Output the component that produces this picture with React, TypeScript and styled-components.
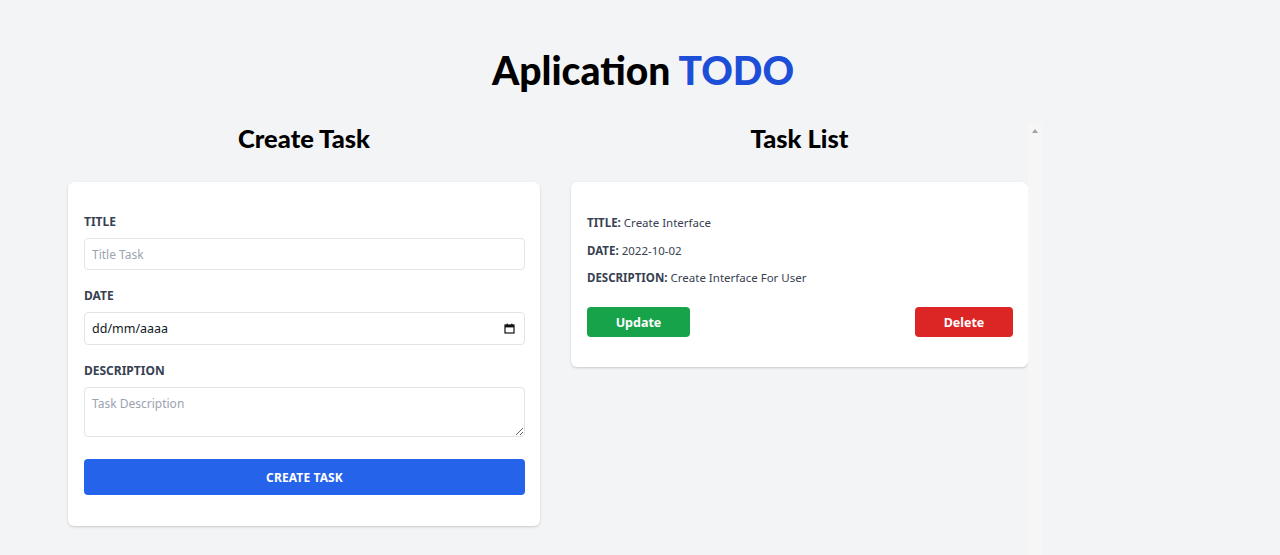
import styled, { createGlobalStyle } from 'styled-components';

const GlobalStyle = createGlobalStyle`
  html, body {
    margin: 0;
    padding: 0;
    height: 100%;
    overflow: hidden;
    background: #f3f4f6;
    font-family: "Noto Sans", "Open Sans", sans-serif;
  }
  * { box-sizing: border-box; }
`;

// ── Page shell ─────────────────────────────────────────────────────────────
const Page = styled.main`
  min-height: 555px;
  padding-top: 50px;
`;

const PageTitle = styled.h1`
  margin: 0;
  text-align: center;
  font-family: Lato, "Noto Sans", sans-serif;
  font-weight: 900;
  font-size: 39px;
  line-height: 40px;
  color: #000;
  padding-left: 6px;

  span {
    color: #1d4ed8;
  }
`;

const Columns = styled.div`
  display: grid;
  grid-template-columns: 472px 471px;
  column-gap: 31px;
  padding-left: 68px;
  margin-top: 32px;
`;

const Column = styled.section`
  display: flex;
  flex-direction: column;
`;

const ScrollColumn = styled.div`
  display: flex;
  height: 440px;
  margin-top: 1px;
`;

const ScrollContent = styled(Column)`
  flex: 1;
  margin-top: -1px;
`;

const ScrollTrack = styled.div`
  width: 14px;
  background: #f6f6f6;
  display: flex;
  justify-content: center;
  padding-top: 6px;

  &::before {
    content: '';
    width: 0;
    height: 0;
    border-left: 3.5px solid transparent;
    border-right: 3.5px solid transparent;
    border-bottom: 4px solid #a3a3a3;
  }
`;

const ColumnHeading = styled.h2`
  margin: 0 0 28px;
  text-align: center;
  font-family: Lato, "Noto Sans", sans-serif;
  font-weight: 900;
  font-size: 25.5px;
  line-height: 32px;
  color: #000;
`;

const Card = styled.div<{ $top?: number; $bottom?: number }>`
  background: #fff;
  border-radius: 6px;
  box-shadow: 0 1px 3px rgba(0, 0, 0, 0.12), 0 1px 2px rgba(0, 0, 0, 0.06);
  padding: ${(p) => p.$top ?? 30}px 15px ${(p) => p.$bottom ?? 30}px 16px;
`;

// ── Form ───────────────────────────────────────────────────────────────────
const FieldLabel = styled.label`
  display: block;
  font-size: 12px;
  font-weight: 700;
  line-height: 20px;
  color: #374151;
  margin-bottom: 6px;
`;

const Field = styled.div<{ $last?: boolean }>`
  margin-bottom: ${(p) => (p.$last ? 22 : 16)}px;
`;

const fieldBase = `
  width: 100%;
  border: 1px solid #e2e4e8;
  border-radius: 4px;
  background: #fff;
  font-family: "Noto Sans", "Open Sans", sans-serif;
  font-size: 12px;
  color: #111827;
  padding: 0 7px;
  outline: none;
`;

const TextInput = styled.input`
  ${fieldBase}
  height: 32px;
  &::placeholder { color: #9ca3af; }
`;

const DateField = styled.div`
  ${fieldBase}
  height: 33px;
  display: flex;
  align-items: center;
  justify-content: space-between;
  font-size: 12.5px;
  padding-right: 9px;
`;

const TextArea = styled.textarea`
  ${fieldBase}
  display: block;
  height: 50px;
  padding-top: 7px;
  resize: vertical;
  &::placeholder { color: #9ca3af; }
`;

const PrimaryButton = styled.button`
  width: 100%;
  height: 36px;
  border: 0;
  border-radius: 4px;
  background: #2563eb;
  color: #fff;
  font-family: "Noto Sans", "Open Sans", sans-serif;
  font-size: 12px;
  font-weight: 700;
  letter-spacing: 0.01em;
`;

// ── Task card ──────────────────────────────────────────────────────────────
const TaskLine = styled.p`
  margin: 0 0 10.5px;
  font-size: 11.5px;
  line-height: 17px;
  color: #374151;

  b {
    font-weight: 700;
  }
`;

const TaskActions = styled.div`
  display: flex;
  justify-content: space-between;
  margin-top: 21px;
`;

const ActionButton = styled.button<{ $tone: 'green' | 'red'; $width: number }>`
  width: ${(p) => p.$width}px;
  height: 30px;
  border: 0;
  border-radius: 4px;
  background: ${(p) => (p.$tone === 'green' ? '#16a34a' : '#dc2626')};
  color: #fff;
  font-family: "Noto Sans", "Open Sans", sans-serif;
  font-size: 12.5px;
  font-weight: 700;
`;

function CalendarIcon() {
  return (
    <svg width="11" height="11" viewBox="0 0 11 11" fill="none">
      <rect x="1" y="2" width="9" height="8" stroke="#111" strokeWidth="1.2" />
      <rect x="1" y="2" width="9" height="2.4" fill="#111" />
      <rect x="2.6" y="0.6" width="1.2" height="2" fill="#111" />
      <rect x="7.2" y="0.6" width="1.2" height="2" fill="#111" />
    </svg>
  );
}

export default function App() {
  return (
    <>
      <GlobalStyle />
      <Page>
        <PageTitle>
          Aplication <span>TODO</span>
        </PageTitle>
        <Columns>
          <Column>
            <ColumnHeading>Create Task</ColumnHeading>
            <Card $bottom={31}>
              <Field>
                <FieldLabel>TITLE</FieldLabel>
                <TextInput placeholder="Title Task" />
              </Field>
              <Field>
                <FieldLabel>DATE</FieldLabel>
                <DateField>
                  <span>dd/mm/aaaa</span>
                  <CalendarIcon />
                </DateField>
              </Field>
              <Field $last>
                <FieldLabel>DESCRIPTION</FieldLabel>
                <TextArea placeholder="Task Description" />
              </Field>
              <PrimaryButton>CREATE TASK</PrimaryButton>
            </Card>
          </Column>
          <ScrollColumn>
            <ScrollContent>
              <ColumnHeading>Task List</ColumnHeading>
              <Card $top={32}>
                <TaskLine>
                  <b>TITLE:</b> Create Interface
                </TaskLine>
                <TaskLine>
                  <b>DATE:</b> 2022-10-02
                </TaskLine>
                <TaskLine>
                  <b>DESCRIPTION:</b> Create Interface For User
                </TaskLine>
                <TaskActions>
                  <ActionButton $tone="green" $width={103}>Update</ActionButton>
                  <ActionButton $tone="red" $width={98}>Delete</ActionButton>
                </TaskActions>
              </Card>
            </ScrollContent>
            <ScrollTrack />
          </ScrollColumn>
        </Columns>
      </Page>
    </>
  );
}
